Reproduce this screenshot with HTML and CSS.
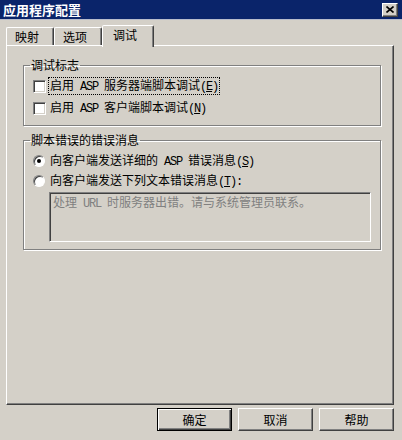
FILE: index.html
```html
<!DOCTYPE html>
<html lang="zh-CN">

<head>
    <meta charset="UTF-8">
    <title>应用程序配置</title>
    <link rel="stylesheet" href="styles.css">
</head>

<body>
    <div class="window">
        <div class="titlebar">
            <span class="title">应用程序配置</span>
            <span class="close-btn">
                <svg width="8" height="7" viewBox="0 0 8 7">
                    <path d="M0.5 0.5L7.5 6.5M7.5 0.5L0.5 6.5" stroke="#000" stroke-width="1.6" fill="none" />
                </svg>
            </span>
        </div>

        <div class="content">
            <!-- 选项卡 -->
            <div class="tabs">
                <div class="tab">映射</div>
                <div class="tab">选项</div>
                <div class="tab active">调试</div>
            </div>

            <div class="panel">
                <fieldset class="group group-debug">
                    <legend>调试标志</legend>
                    <div class="option">
                        <span class="checkbox"></span>
                        <span class="label focus">启用<span class="lat"> ASP </span>服务器端脚本调试<span class="lat">(<u>E</u>)</span></span>
                    </div>
                    <div class="option">
                        <span class="checkbox"></span>
                        <span class="label">启用<span class="lat"> ASP </span>客户端脚本调试<span class="lat">(<u>N</u>)</span></span>
                    </div>
                </fieldset>

                <fieldset class="group group-error">
                    <legend>脚本错误的错误消息</legend>
                    <div class="option radio-row">
                        <span class="radio checked"></span>
                        <span class="label">向客户端发送详细的<span class="lat"> ASP </span>错误消息<span class="lat">(<u>S</u>)</span></span>
                    </div>
                    <div class="option radio-row">
                        <span class="radio"></span>
                        <span class="label">向客户端发送下列文本错误消息<span class="lat">(<u>T</u>):</span></span>
                    </div>
                    <div class="message-box">处理<span class="lat"> URL </span>时服务器出错。请与系统管理员联系。</div>
                </fieldset>
            </div>

            <div class="buttons">
                <div class="btn default"><span>确定</span></div>
                <div class="btn"><span>取消</span></div>
                <div class="btn"><span>帮助</span></div>
            </div>
        </div>
    </div>
</body>

</html>
```

FILE: styles.css
```css
:root {
    --face: #d4d0c8;
    --shadow: #808080;
    --dark: #404040;
    --caption: #0a246a;
}

* {
    margin: 0;
    padding: 0;
    box-sizing: border-box;
}

body {
    font-family: "Noto Sans CJK SC", sans-serif;
    font-size: 12px;
    color: #000;
    background-color: var(--face);
    width: 402px;
    height: 440px;
    overflow: hidden;
}

.window {
    width: 402px;
    height: 440px;
    display: flex;
    flex-direction: column;
}

.titlebar {
    height: 20px;
    background-color: var(--caption);
    border-bottom: 1px solid #b8bccc;
    display: flex;
    align-items: center;
    justify-content: space-between;
    padding: 0 4px 0 3px;
}

.title {
    color: #fff;
    font-size: 13px;
    font-weight: bold;
    line-height: 16px;
}

.close-btn {
    width: 16px;
    height: 14px;
    background-color: var(--face);
    border: 1px solid;
    border-color: #fff var(--dark) var(--dark) #fff;
    box-shadow: inset -1px -1px 0 var(--shadow);
    display: flex;
    align-items: flex-start;
    padding: 2px 0 0 3px;
}

.close-btn svg {
    display: block;
}

.content {
    flex: 1;
    display: flex;
    flex-direction: column;
    padding: 0 8px 0 6px;
}

/* 选项卡 */
.tabs {
    height: 22px;
    margin-top: 3px;
    display: flex;
    align-items: flex-end;
}

.tab {
    width: 48px;
    height: 18px;
    padding: 2px 0 0 8px;
    line-height: 14px;
    border: 1px solid;
    border-bottom: none;
    border-color: #fff var(--dark) transparent #fff;
    border-radius: 2px 2px 0 0;
    box-shadow: inset -1px 0 0 var(--shadow);
}

.tab.active {
    width: 52px;
    height: 22px;
    margin-bottom: -2px;
    padding: 2px 0 0 10px;
    background-color: var(--face);
    position: relative;
    z-index: 1;
}

.panel {
    height: 360px;
    border: 1px solid;
    border-color: #fff var(--dark) var(--dark) #fff;
    box-shadow: inset -1px -1px 0 var(--shadow);
    padding: 12px 12px 0 16px;
}

/* 分组框 */
.group {
    border: 1px solid var(--shadow);
    box-shadow: 1px 1px 0 #fff, inset 1px 1px 0 #fff;
    padding: 3px 0 6px 9px;
}

.group legend {
    margin-left: -3px;
    padding: 0 1px;
    line-height: 14px;
}

.group-error {
    margin-top: 7px;
    padding: 4px 0 7px 9px;
}

.option {
    height: 22px;
    display: flex;
    align-items: center;
}

.radio-row {
    height: 20px;
}

.checkbox {
    width: 13px;
    height: 13px;
    background-color: #fff;
    border: 1px solid;
    border-color: var(--shadow) #fff #fff var(--shadow);
    box-shadow: inset 1px 1px 0 var(--dark), inset -1px -1px 0 var(--face);
    margin-right: 2px;
}

.radio {
    width: 12px;
    height: 12px;
    border-radius: 50%;
    background-color: #fff;
    border: 1px solid;
    border-color: var(--shadow) #fff #fff var(--shadow);
    box-shadow: inset 1px 1px 0 var(--dark);
    margin-right: 3px;
    display: flex;
    align-items: center;
    justify-content: center;
}

.radio.checked::after {
    content: "";
    width: 4px;
    height: 4px;
    border-radius: 50%;
    background-color: #000;
}

.label {
    border: 1px solid transparent;
    padding: 0 1px;
    line-height: 14px;
    white-space: nowrap;
}

.label.focus {
    border: 1px dotted #000;
}

.lat {
    font-family: "Liberation Mono", monospace;
    letter-spacing: -1.2px;
}

.message-box {
    width: 322px;
    height: 50px;
    margin: 1px 0 0 16px;
    border: 1px solid;
    border-color: var(--shadow) #fff #fff var(--shadow);
    box-shadow: inset 1px 1px 0 var(--dark), inset -1px -1px 0 var(--face);
    padding: 2px 3px;
    color: var(--shadow);
    line-height: 14px;
}

/* 按钮 */
.buttons {
    display: flex;
    justify-content: flex-end;
    gap: 6px;
    margin-top: 3px;
}

.btn {
    width: 75px;
    height: 23px;
    border: 1px solid;
    border-color: #fff var(--dark) var(--dark) #fff;
    box-shadow: inset -1px -1px 0 var(--shadow);
    display: flex;
    align-items: center;
    justify-content: center;
    line-height: 14px;
}

.btn.default {
    border: 1px solid #000;
    box-shadow: inset 1px 1px 0 #fff, inset -1px -1px 0 var(--dark), inset -2px -2px 0 var(--shadow);
}
```
